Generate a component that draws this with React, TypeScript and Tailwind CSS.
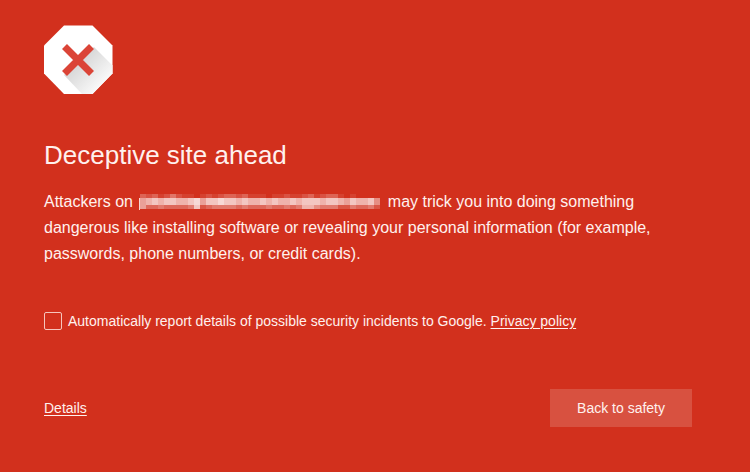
const TOP = [3, 2, 3, 1, 2, 4, 2, 1, 1, 0, 1, 2, 1, 2, 3, 3, 2, 3, 1, 1, 1, 0, 1, 1, 2, 1, 1, 2, 3, 1, 2, 3, 3, 1, 0, 1, 0, 0, 0, 0]
const MIDDLE = [6, 7, 8, 7, 8, 8, 7, 7, 8, 9, 6, 8, 8, 9, 8, 8, 7, 8, 7, 7, 8, 7, 8, 7, 7, 8, 7, 8, 8, 8, 7, 8, 8, 7, 6, 8, 7, 7, 8, 5]
const BOTTOM = [6, 3, 3, 4, 3, 3, 3, 3, 4, 8, 2, 3, 4, 4, 4, 4, 3, 4, 3, 3, 3, 4, 3, 3, 4, 3, 4, 7, 7, 5, 4, 4, 4, 2, 2, 4, 3, 3, 4, 2]

function HiddenAddress() {
    return (
        <svg className="mx-0.5 inline-block align-text-bottom" width="242" height="18" aria-hidden="true" shapeRendering="crispEdges">
            {TOP.map((v, i) => (
                <rect key={i} x={i * 6 + 1} y="2" width="6" height="4" fill="#fff" fillOpacity={v / 12} />
            ))}
            {MIDDLE.map((v, i) => (
                <rect key={i} x={i * 6 + 1} y="6" width="6" height="7" fill="#fff" fillOpacity={v / 11} />
            ))}
            {BOTTOM.map((v, i) => (
                <rect key={i} x={i * 6 + 1} y="13" width="6" height="4" fill="#fff" fillOpacity={v / 11} />
            ))}
            <rect x="0" y="6" width="1" height="12" fill="#fff" fillOpacity="0.8" />
        </svg>
    )
}

function WarningIcon() {
    return (
        <svg width="70" height="70" viewBox="0 0 70 70" aria-hidden="true">
            <defs>
                <linearGradient id="shade" gradientUnits="userSpaceOnUse" x1="35" y1="35" x2="58" y2="58">
                    <stop offset="0" stopColor="#d6d6d6" />
                    <stop offset="1" stopColor="#f8f8f8" />
                </linearGradient>
            </defs>
            <path d="M20 0.5h28.5l20 20v28l-20 20.500H20L0 48.500v-28z" fill="#fff" />
            <path d="M50 22l18.500 18.500v8l-20 20.500H38L20 50z" fill="url(#shade)" />
            <path d="M20.500 21.500l27 27M47.500 21.500l-27 27" stroke="#db4437" strokeWidth="7" />
        </svg>
    )
}

export default function App() {
    return (
        <main className="min-h-screen bg-[#d2301d] pl-11 pr-[58px] pt-[25px] pb-11 font-['Liberation_Sans',Arial,sans-serif] text-[#fff1ee]">
            <WarningIcon />

            <h1 className="mt-11 text-[26px] leading-8">Deceptive site ahead</h1>

            <p className="mt-[18px] text-base leading-[26px]">
                Attackers on <HiddenAddress /> may trick you into doing something dangerous like installing software or
                revealing your personal information (for example, passwords, phone numbers, or credit cards).
            </p>

            <div className="mt-11 flex items-center text-sm leading-5">
                <input
                    id="report"
                    type="checkbox"
                    className="mr-1.5 size-[18px] shrink-0 appearance-none rounded-xs border border-[#f6c5bd] checked:bg-white/60"
                />
                <span>
                    <label htmlFor="report">
                        Automatically report details of possible security incidents to Google.
                    </label>{' '}
                    <a href="#privacy" className="underline underline-offset-2">Privacy policy</a>
                </span>
            </div>

            <div className="mt-[58px] flex items-center justify-between text-sm leading-5">
                <a href="#details" className="underline underline-offset-2">Details</a>
                <button type="button" className="bg-[#d85140] px-[27px] py-[9px]">Back to safety</button>
            </div>
        </main>
    )
}
